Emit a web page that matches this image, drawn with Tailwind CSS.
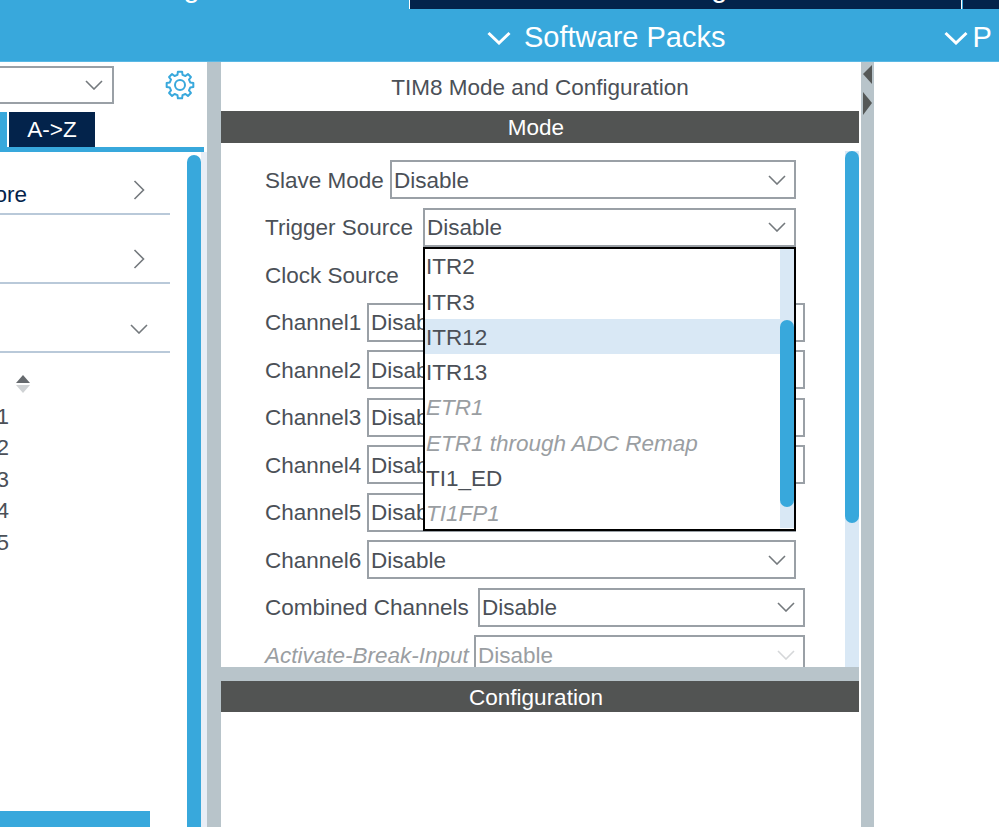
<!DOCTYPE html>
<html lang="en">
<head>
  <meta charset="UTF-8">
  <title>TIM8 Mode and Configuration</title>
  <script src="https://cdn.jsdelivr.net/npm/@tailwindcss/browser@4"></script>
</head>
<body class="w-[999px] h-[827px] overflow-hidden bg-white text-[#4b5057] font-['Liberation_Sans',Arial,sans-serif]">

  <!-- Top tabs, only the bottom edge is in view -->
  <div class="flex h-[9px] bg-[#38a8dc] overflow-hidden text-white text-[29px] leading-none">
    <div class="w-[409px] flex items-end">
      <span class="whitespace-nowrap -ml-[2px] mb-[7px]">Pinout &amp; Configuration</span>
    </div>
    <div class="w-[553px] bg-[#03234b] border-x border-white flex items-end">
      <span class="whitespace-nowrap ml-[153px] mb-[7px]">Clock Configuration</span>
    </div>
    <div class="w-[1px]"></div>
    <div class="flex-1 bg-[#03234b]"></div>
  </div>

  <!-- Second header row -->
  <div class="flex items-center h-[53px] pt-[6px] bg-[#38a8dc] border-b border-[#5ab8e4] text-white text-[29px]">
    <div class="flex items-center ml-[487px] gap-[13px]">
      <svg class="w-[24px] h-[14px]" viewBox="0 0 24 14" fill="none" stroke="white" stroke-width="3"><path d="M1.5 2 L12 12 L22.5 2"/></svg>
      <span class="whitespace-nowrap">Software Packs</span>
    </div>
    <div class="flex items-center ml-[219px] gap-[4px]">
      <svg class="w-[24px] h-[14px]" viewBox="0 0 24 14" fill="none" stroke="white" stroke-width="3"><path d="M1.5 2 L12 12 L22.5 2"/></svg>
      <span>P</span>
    </div>
  </div>

  <div class="flex h-[765px]">

    <!-- Left panel -->
    <div class="w-[207px] flex flex-col">
      <div class="flex items-center h-[50px] pb-[4px]">
        <div class="w-[114px] h-[38px] border-2 border-l-0 border-[#9aa0a6] flex items-center justify-end pr-[9px]">
          <svg class="w-[18px] h-[10px]" viewBox="0 0 18 10" fill="none" stroke="#74797d" stroke-width="1.6"><path d="M1 1 L9 9 L17 1"/></svg>
        </div>
        <svg class="w-[30px] h-[30px] ml-[51px]" viewBox="-15 -15 30 30" fill="none" stroke="#38a8dc" stroke-width="2" stroke-linejoin="round">
          <path d="M10.19 -2.54 L13.33 -2.11 L13.33 2.11 L10.19 2.54 L9 5.41 L10.92 7.94 L7.94 10.92 L5.41 9 L2.54 10.19 L2.11 13.33 L-2.11 13.33 L-2.54 10.19 L-5.41 9 L-7.94 10.92 L-10.92 7.94 L-9 5.41 L-10.19 2.54 L-13.33 2.11 L-13.33 -2.11 L-10.19 -2.54 L-9 -5.41 L-10.92 -7.94 L-7.94 -10.92 L-5.41 -9 L-2.54 -10.19 L-2.11 -13.33 L2.11 -13.33 L2.54 -10.19 L5.41 -9 L7.94 -10.92 L10.92 -7.94 L9 -5.41 Z"/>
          <circle r="5"/>
        </svg>
      </div>
      <div class="flex h-[35px] gap-[2px]">
        <div class="w-[7px] bg-[#38a8dc]"></div>
        <div class="w-[86px] bg-[#03234b] text-white text-[22.5px] flex items-center justify-center">A-&gt;Z</div>
      </div>
      <div class="h-[5px] w-[204px] bg-[#38a8dc]"></div>

      <div class="flex-1 flex min-h-0">
        <div class="w-[187px] flex flex-col">
          <div class="w-[170px] h-[63px] border-b-2 border-[#b9c9d9] flex items-center justify-between pr-[25px] pt-[24px]">
            <div class="w-[27px] overflow-hidden flex justify-end text-[22.5px] text-[#03234b]"><span class="whitespace-nowrap">System Core</span></div>
            <svg class="w-[12px] h-[20px] -mt-[10px]" viewBox="0 0 12 20" fill="none" stroke="#74797d" stroke-width="1.6"><path d="M1.5 1 L10.5 10 L1.5 19"/></svg>
          </div>
          <div class="w-[170px] h-[69px] border-b-2 border-[#b9c9d9] flex items-center justify-end pr-[25px]">
            <svg class="w-[12px] h-[20px] mt-[20px]" viewBox="0 0 12 20" fill="none" stroke="#74797d" stroke-width="1.6"><path d="M1.5 1 L10.5 10 L1.5 19"/></svg>
          </div>
          <div class="w-[170px] h-[69px] border-b-2 border-[#b9c9d9] flex items-center justify-end pr-[22px]">
            <svg class="w-[18px] h-[10px] mt-[22px]" viewBox="0 0 18 10" fill="none" stroke="#74797d" stroke-width="1.6"><path d="M1 1 L9 9 L17 1"/></svg>
          </div>
          <div class="pl-[15px] pt-[21px] h-[48px]">
            <svg class="w-[16px] h-[20px]" viewBox="0 0 16 20">
              <path d="M8 1 L15 9 L1 9 Z" fill="#666a6e"/>
              <path d="M8 19 L15 11 L1 11 Z" fill="#cfd2d4"/>
            </svg>
          </div>
          <div class="flex flex-col text-[22.5px]">
            <div class="w-[9px] h-[31.5px] overflow-hidden flex justify-end items-center"><span class="whitespace-nowrap">TIM1</span></div>
            <div class="w-[9px] h-[31.5px] overflow-hidden flex justify-end items-center"><span class="whitespace-nowrap">TIM2</span></div>
            <div class="w-[9px] h-[31.5px] overflow-hidden flex justify-end items-center"><span class="whitespace-nowrap">TIM3</span></div>
            <div class="w-[9px] h-[31.5px] overflow-hidden flex justify-end items-center"><span class="whitespace-nowrap">TIM4</span></div>
            <div class="w-[9px] h-[31.5px] overflow-hidden flex justify-end items-center"><span class="whitespace-nowrap">TIM5</span></div>
          </div>
          <div class="mt-auto w-[150px] h-[16px] bg-[#38a8dc]"></div>
        </div>
        <div class="w-[14px] mt-[3px] bg-[#38a8dc] rounded-t-full"></div>
        <div class="w-[6px] bg-[#e8eef6]"></div>
      </div>
    </div>

    <div class="w-[14px] bg-[#b8c4ca]"></div>

    <!-- Middle panel -->
    <div class="w-[638px] flex flex-col relative">
      <div class="h-[49px] pt-[2px] flex items-center justify-center text-[22.5px]">TIM8 Mode and Configuration</div>
      <div class="h-[32px] pt-[2px] pr-[8px] bg-[#525453] text-white text-[22.5px] flex items-center justify-center">Mode</div>

      <div class="h-[524px] flex overflow-hidden">
        <div class="w-[624px] pl-[44px] pt-[17px] flex flex-col gap-[8.5px] text-[22.5px] shrink-0">
          <div class="flex items-center h-[39px] shrink-0">
            <span class="w-[125px] shrink-0 pt-[2px]">Slave Mode</span>
            <div class="w-[406px] h-[39px] border-2 border-[#9aa0a6] flex items-center justify-between pl-[2px] pt-[2px] pr-[8px]">Disable
              <svg class="w-[18px] h-[10px] -mt-[2px]" viewBox="0 0 18 10" fill="none" stroke="#74797d" stroke-width="1.6"><path d="M1 1 L9 9 L17 1"/></svg>
            </div>
          </div>
          <div class="flex items-center h-[39px] shrink-0">
            <span class="w-[158px] shrink-0 pt-[2px]">Trigger Source</span>
            <div class="w-[373px] h-[39px] border-2 border-[#9aa0a6] flex items-center justify-between pl-[2px] pt-[2px] pr-[8px]">Disable
              <svg class="w-[18px] h-[10px] -mt-[2px]" viewBox="0 0 18 10" fill="none" stroke="#74797d" stroke-width="1.6"><path d="M1 1 L9 9 L17 1"/></svg>
            </div>
          </div>
          <div class="flex items-center h-[39px] shrink-0 pt-[3px]">Clock Source</div>
          <div class="flex items-center h-[39px] shrink-0">
            <span class="w-[102px] shrink-0 pt-[2px]">Channel1</span>
            <div class="w-[438px] h-[39px] border-2 border-[#9aa0a6] flex items-center pl-[2px] pt-[2px]">Disable</div>
          </div>
          <div class="flex items-center h-[39px] shrink-0">
            <span class="w-[102px] shrink-0 pt-[2px]">Channel2</span>
            <div class="w-[438px] h-[39px] border-2 border-[#9aa0a6] flex items-center pl-[2px] pt-[2px]">Disable</div>
          </div>
          <div class="flex items-center h-[39px] shrink-0">
            <span class="w-[102px] shrink-0 pt-[2px]">Channel3</span>
            <div class="w-[438px] h-[39px] border-2 border-[#9aa0a6] flex items-center pl-[2px] pt-[2px]">Disable</div>
          </div>
          <div class="flex items-center h-[39px] shrink-0">
            <span class="w-[102px] shrink-0 pt-[2px]">Channel4</span>
            <div class="w-[438px] h-[39px] border-2 border-[#9aa0a6] flex items-center pl-[2px] pt-[2px]">Disable</div>
          </div>
          <div class="flex items-center h-[39px] shrink-0">
            <span class="w-[102px] shrink-0 pt-[2px]">Channel5</span>
            <div class="w-[429px] h-[39px] border-2 border-[#9aa0a6] flex items-center pl-[2px] pt-[2px]">Disable</div>
          </div>
          <div class="flex items-center h-[39px] shrink-0">
            <span class="w-[102px] shrink-0 pt-[2px]">Channel6</span>
            <div class="w-[429px] h-[39px] border-2 border-[#9aa0a6] flex items-center justify-between pl-[2px] pt-[2px] pr-[8px]">Disable
              <svg class="w-[18px] h-[10px] -mt-[2px]" viewBox="0 0 18 10" fill="none" stroke="#74797d" stroke-width="1.6"><path d="M1 1 L9 9 L17 1"/></svg>
            </div>
          </div>
          <div class="flex items-center h-[39px] shrink-0">
            <span class="w-[213px] shrink-0 pt-[2px]">Combined Channels</span>
            <div class="w-[327px] h-[39px] border-2 border-[#9aa0a6] flex items-center justify-between pl-[2px] pt-[2px] pr-[8px]">Disable
              <svg class="w-[18px] h-[10px] -mt-[2px]" viewBox="0 0 18 10" fill="none" stroke="#74797d" stroke-width="1.6"><path d="M1 1 L9 9 L17 1"/></svg>
            </div>
          </div>
          <div class="flex items-center h-[39px] shrink-0 text-[#9a9ea2]">
            <span class="w-[209px] shrink-0 italic pt-[2px] whitespace-nowrap">Activate-Break-Input</span>
            <div class="w-[331px] h-[39px] border-2 border-[#9aa0a6] flex items-center justify-between pl-[2px] pt-[2px] pr-[8px]">Disable
              <svg class="w-[18px] h-[10px] -mt-[2px]" viewBox="0 0 18 10" fill="none" stroke="#d5d7d9" stroke-width="1.6"><path d="M1 1 L9 9 L17 1"/></svg>
            </div>
          </div>
        </div>
        <div class="w-[14px] mt-[8px] bg-[#d9e8f5] shrink-0">
          <div class="h-[372px] bg-[#38a8dc] rounded-full"></div>
        </div>
      </div>

      <div class="h-[14px] bg-[#b8c4ca]"></div>
      <div class="h-[31px] pt-[2px] pr-[8px] bg-[#525453] text-white text-[22.5px] flex items-center justify-center">Configuration</div>

      <!-- Open dropdown of Trigger Source -->
      <div class="absolute left-[202px] top-[185px] w-[373px] h-[284px] bg-white border-2 border-black flex text-[22.5px]">
        <div class="w-[355px] -mt-[1px] flex flex-col">
          <div class="h-[35.3px] shrink-0 flex items-center pl-[1px] pt-[3px]">ITR2</div>
          <div class="h-[35.3px] shrink-0 flex items-center pl-[1px] pt-[3px]">ITR3</div>
          <div class="h-[35.3px] shrink-0 flex items-center pl-[1px] pt-[3px] bg-[#d9e8f5]">ITR12</div>
          <div class="h-[35.3px] shrink-0 flex items-center pl-[1px] pt-[3px]">ITR13</div>
          <div class="h-[35.3px] shrink-0 flex items-center pl-[1px] pt-[3px] italic text-[#9a9ea2]">ETR1</div>
          <div class="h-[35.3px] shrink-0 flex items-center pl-[1px] pt-[3px] italic text-[#9a9ea2]">ETR1 through ADC Remap</div>
          <div class="h-[35.3px] shrink-0 flex items-center pl-[1px] pt-[3px]">TI1_ED</div>
          <div class="h-[35.3px] shrink-0 flex items-center pl-[1px] pt-[3px] italic text-[#9a9ea2]">TI1FP1</div>
        </div>
        <div class="w-[14px] h-[279px] bg-[#d9e8f5] pt-[71px]">
          <div class="h-[187px] bg-[#38a8dc] rounded-full"></div>
        </div>
      </div>
    </div>

    <div class="w-[2px] bg-white"></div>

    <!-- Splitter with collapse arrows -->
    <div class="w-[13px] bg-[#b8c4ca] flex flex-col items-center">
      <svg class="w-[11px] h-[56px]" viewBox="0 0 11 56" fill="#555857">
        <path d="M10 3 L1 12 L10 22 Z"/>
        <path d="M1 30 L10 41 L1 53 Z"/>
      </svg>
    </div>

    <div class="flex-1 bg-white"></div>
  </div>
</body>
</html>
